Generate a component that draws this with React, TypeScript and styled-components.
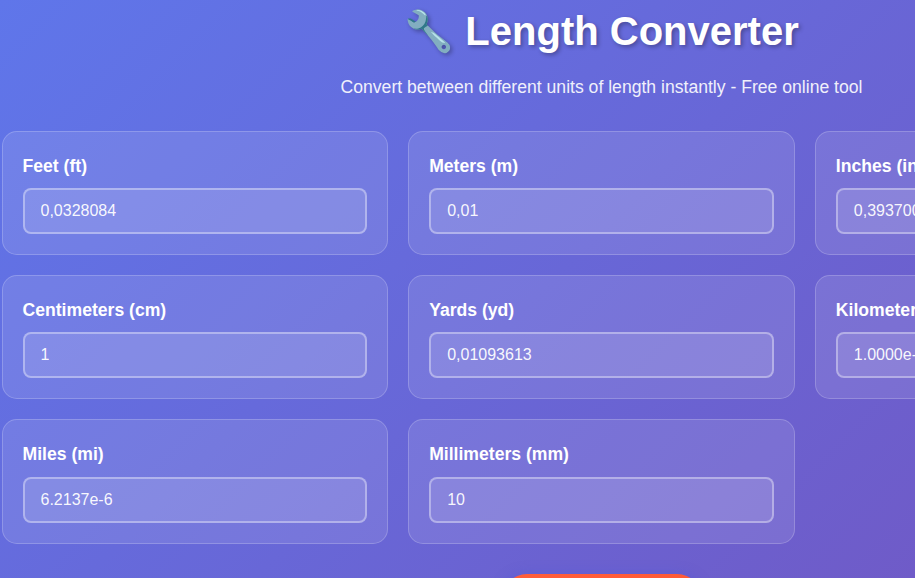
import styled, { createGlobalStyle } from 'styled-components'

const GlobalStyle = createGlobalStyle`
  * {
    box-sizing: border-box;
  }

  html,
  body {
    margin: 0;
    height: 578px;
    overflow: hidden;
  }

  body {
    font-family: 'Liberation Sans', Arial, sans-serif;
    color: #fff;
    background: linear-gradient(135deg, #5f76ea 0%, #6f5bc8 100%);
  }
`

const Page = styled.main`
  width: 1200px;
  margin-left: 1.5px;
  padding-top: 8px;
`

const Header = styled.header`
  text-align: center;
  margin-bottom: 33.6px;
`

const Title = styled.h1`
  margin: 0 0 23px;
  font-size: 40px;
  line-height: 46px;
  font-weight: 700;
  text-shadow: 2px 2px 4px rgba(0, 0, 0, 0.3);
`

const Subtitle = styled.p`
  margin: 0;
  font-size: 17.6px;
  line-height: 20px;
  opacity: 0.9;
`

const Grid = styled.div`
  display: grid;
  grid-template-columns: repeat(3, 1fr);
  gap: 20px;
`

const Card = styled.div`
  padding: 24px 20px 20px;
  background: rgba(255, 255, 255, 0.1);
  border: 1px solid rgba(255, 255, 255, 0.2);
  border-radius: 15px;
`

const Label = styled.label`
  display: block;
  margin-bottom: 12.4px;
  font-size: 17.6px;
  line-height: 20px;
  font-weight: 600;
`

const Input = styled.input`
  display: block;
  width: 100%;
  height: 46px;
  padding: 0 16px;
  font-family: inherit;
  font-size: 16px;
  color: rgba(255, 255, 255, 0.95);
  background: rgba(255, 255, 255, 0.12);
  border: 2px solid rgba(255, 255, 255, 0.36);
  border-radius: 8px;
  outline: none;
`

const Actions = styled.div`
  display: flex;
  justify-content: center;
  margin-top: 30px;
`

const ClearButton = styled.button`
  width: 200px;
  height: 50px;
  font-family: inherit;
  font-size: 17.6px;
  font-weight: 600;
  color: #fff;
  background: linear-gradient(45deg, #ff5f3c, #ff5a36);
  border: none;
  border-radius: 25px;
  box-shadow: 0 0 12px rgba(80, 90, 220, 0.5);
`

const UNITS = [
  { label: 'Feet (ft)', value: '0,0328084' },
  { label: 'Meters (m)', value: '0,01' },
  { label: 'Inches (in)', value: '0,3937008' },
  { label: 'Centimeters (cm)', value: '1' },
  { label: 'Yards (yd)', value: '0,01093613' },
  { label: 'Kilometers (km)', value: '1.0000e-5' },
  { label: 'Miles (mi)', value: '6.2137e-6' },
  { label: 'Millimeters (mm)', value: '10' },
]

export default function App() {
  return (
    <>
      <GlobalStyle />
      <Page>
        <Header>
          <Title>🔧 Length Converter</Title>
          <Subtitle>Convert between different units of length instantly - Free online tool</Subtitle>
        </Header>
        <Grid>
          {UNITS.map((unit) => (
            <Card key={unit.label}>
              <Label>{unit.label}</Label>
              <Input type='text' defaultValue={unit.value} />
            </Card>
          ))}
        </Grid>
        <Actions>
          <ClearButton>Clear All</ClearButton>
        </Actions>
      </Page>
    </>
  )
}
